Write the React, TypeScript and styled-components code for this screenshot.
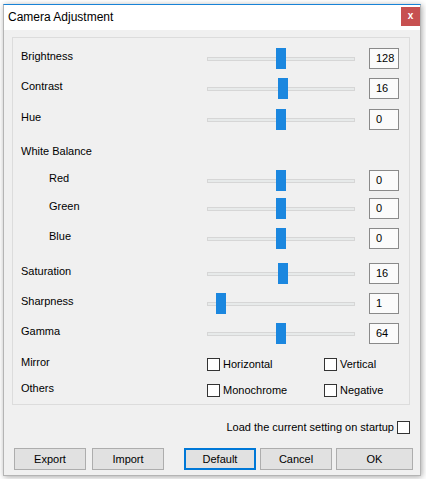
import styled, { createGlobalStyle } from "styled-components"

const Global = createGlobalStyle`
  html, body {
    margin: 0;
    padding: 0;
    background: #ffffff;
  }
  * {
    box-sizing: border-box;
  }
`

const Page = styled.div`
  width: 426px;
  height: 479px;
  padding: 4px 0 0 3px;
  font-family: "Liberation Sans", Arial, sans-serif;
  font-size: 11px;
  color: #000;
`

const Window = styled.div`
  width: 418px;
  height: 472px;
  display: flex;
  flex-direction: column;
  background: #f0f0f0;
  border: 1px solid #b4b4b4;
  border-top-color: #1883d7;
  box-shadow: 1px 1px 6px rgba(0, 0, 0, 0.35);
`

const TitleBar = styled.div`
  height: 25px;
  display: flex;
  align-items: flex-start;
  background: #ffffff;
  padding-left: 4px;
`

const Title = styled.div`
  flex: 1;
  font-size: 12px;
  line-height: 14px;
  margin-top: 5px;
`

const CloseBtn = styled.div`
  width: 19px;
  height: 19px;
  margin-top: 2px;
  background: #c75050;
  color: #fff;
  font-weight: 700;
  font-size: 10px;
  line-height: 17px;
  text-align: center;
`

const Body = styled.div`
  flex: 1;
  display: flex;
  flex-direction: column;
  padding: 7px 0 0 0;
`

const Group = styled.div`
  margin: 0 10px 0 8px;
  border: 1px solid #dcdcdc;
  padding: 10px 10px 3px 8px;
`

const Row = styled.div<{ $mt: number }>`
  display: flex;
  align-items: flex-start;
  height: 21px;
  margin-top: ${(p) => p.$mt}px;
`

const Label = styled.div<{ $indent?: boolean }>`
  flex: 1;
  line-height: 13px;
  padding-top: 2px;
  padding-left: ${(p) => (p.$indent ? 28 : 0)}px;
`

const Slider = styled.div`
  position: relative;
  width: 148px;
  height: 21px;
  display: flex;
  align-items: center;
`

const Track = styled.div`
  width: 148px;
  height: 4px;
  border: 1px solid #d6d6d6;
  background: #e7eaea;
`

const Thumb = styled.div`
  position: absolute;
  top: 0;
  width: 10px;
  height: 21px;
  background: #1b87df;
`

const ValueBox = styled.div`
  width: 30px;
  height: 21px;
  margin-left: 14px;
  border: 1px solid #8a8a8a;
  background: #fbfbfb;
  padding-left: 6px;
  line-height: 19px;
`

const Option = styled.label<{ $w?: number }>`
  display: flex;
  align-items: center;
  gap: 3px;
  height: 21px;
  width: ${(p) => (p.$w ? `${p.$w}px` : "auto")};
  line-height: 13px;
`

const Box = styled.span`
  display: inline-block;
  width: 13px;
  height: 13px;
  border: 1px solid #333333;
  background: #ffffff;
`

const OptionCells = styled.div`
  display: flex;
  width: 192px;
`

const StartupRow = styled.div`
  display: flex;
  justify-content: flex-end;
  align-items: center;
  gap: 3px;
  margin: 16px 10px 0 0;
  height: 13px;
  line-height: 13px;
`

const ButtonBar = styled.div`
  display: flex;
  margin-top: 14px;
  padding: 0 7px 0 10px;
`

const ButtonGroup = styled.div<{ $gap: number; $push?: boolean }>`
  display: flex;
  gap: ${(p) => p.$gap}px;
  margin-left: ${(p) => (p.$push ? "auto" : "0")};
`

const Button = styled.button<{ $w?: number; $primary?: boolean }>`
  width: ${(p) => p.$w || 72}px;
  height: 22px;
  padding: 0;
  background: #e1e1e1;
  border: ${(p) => (p.$primary ? "2px solid #0078d7" : "1px solid #adadad")};
  font-family: "Liberation Sans", Arial, sans-serif;
  font-size: 11px;
  color: #000;
`

type SliderRow = { name: string; value: number; min: number; max: number; mt: number; indent?: boolean }

const top: SliderRow[] = [
  { name: "Brightness", value: 128, min: 0, max: 255, mt: 0 },
  { name: "Contrast", value: 16, min: 0, max: 31, mt: 9 },
  { name: "Hue", value: 0, min: -180, max: 180, mt: 10 },
]

const balance: SliderRow[] = [
  { name: "Red", value: 0, min: -100, max: 100, mt: 6, indent: true },
  { name: "Green", value: 0, min: -100, max: 100, mt: 7, indent: true },
  { name: "Blue", value: 0, min: -100, max: 100, mt: 9, indent: true },
]

const bottom: SliderRow[] = [
  { name: "Saturation", value: 16, min: 0, max: 31, mt: 14 },
  { name: "Sharpness", value: 1, min: 0, max: 15, mt: 9 },
  { name: "Gamma", value: 64, min: 0, max: 128, mt: 9 },
]

function SliderLine({ row }: { row: SliderRow }) {
  const left = ((row.value - row.min) / (row.max - row.min)) * (148 - 10)
  return (
    <Row $mt={row.mt}>
      <Label $indent={row.indent}>{row.name}</Label>
      <Slider>
        <Track />
        <Thumb style={{ left: Math.round(left) }} />
      </Slider>
      <ValueBox>{row.value}</ValueBox>
    </Row>
  )
}

export default function App() {
  return (
    <>
      <Global />
      <Page>
        <Window>
          <TitleBar>
            <Title>Camera Adjustment</Title>
            <CloseBtn>x</CloseBtn>
          </TitleBar>
          <Body>
            <Group>
              {top.map((r) => (
                <SliderLine key={r.name} row={r} />
              ))}
              <Row $mt={13}>
                <Label>White Balance</Label>
              </Row>
              {balance.map((r) => (
                <SliderLine key={r.name} row={r} />
              ))}
              {bottom.map((r) => (
                <SliderLine key={r.name} row={r} />
              ))}
              <Row $mt={10}>
                <Label>Mirror</Label>
                <OptionCells>
                  <Option $w={117}>
                    <Box />
                    Horizontal
                  </Option>
                  <Option>
                    <Box />
                    Vertical
                  </Option>
                </OptionCells>
              </Row>
              <Row $mt={5}>
                <Label>Others</Label>
                <OptionCells>
                  <Option $w={117}>
                    <Box />
                    Monochrome
                  </Option>
                  <Option>
                    <Box />
                    Negative
                  </Option>
                </OptionCells>
              </Row>
            </Group>
            <StartupRow>
              Load the current setting on startup
              <Box />
            </StartupRow>
            <ButtonBar>
              <ButtonGroup $gap={6}>
                <Button>Export</Button>
                <Button>Import</Button>
              </ButtonGroup>
              <ButtonGroup $gap={4} $push>
                <Button $primary>Default</Button>
                <Button>Cancel</Button>
                <Button $w={77}>OK</Button>
              </ButtonGroup>
            </ButtonBar>
          </Body>
        </Window>
      </Page>
    </>
  )
}
